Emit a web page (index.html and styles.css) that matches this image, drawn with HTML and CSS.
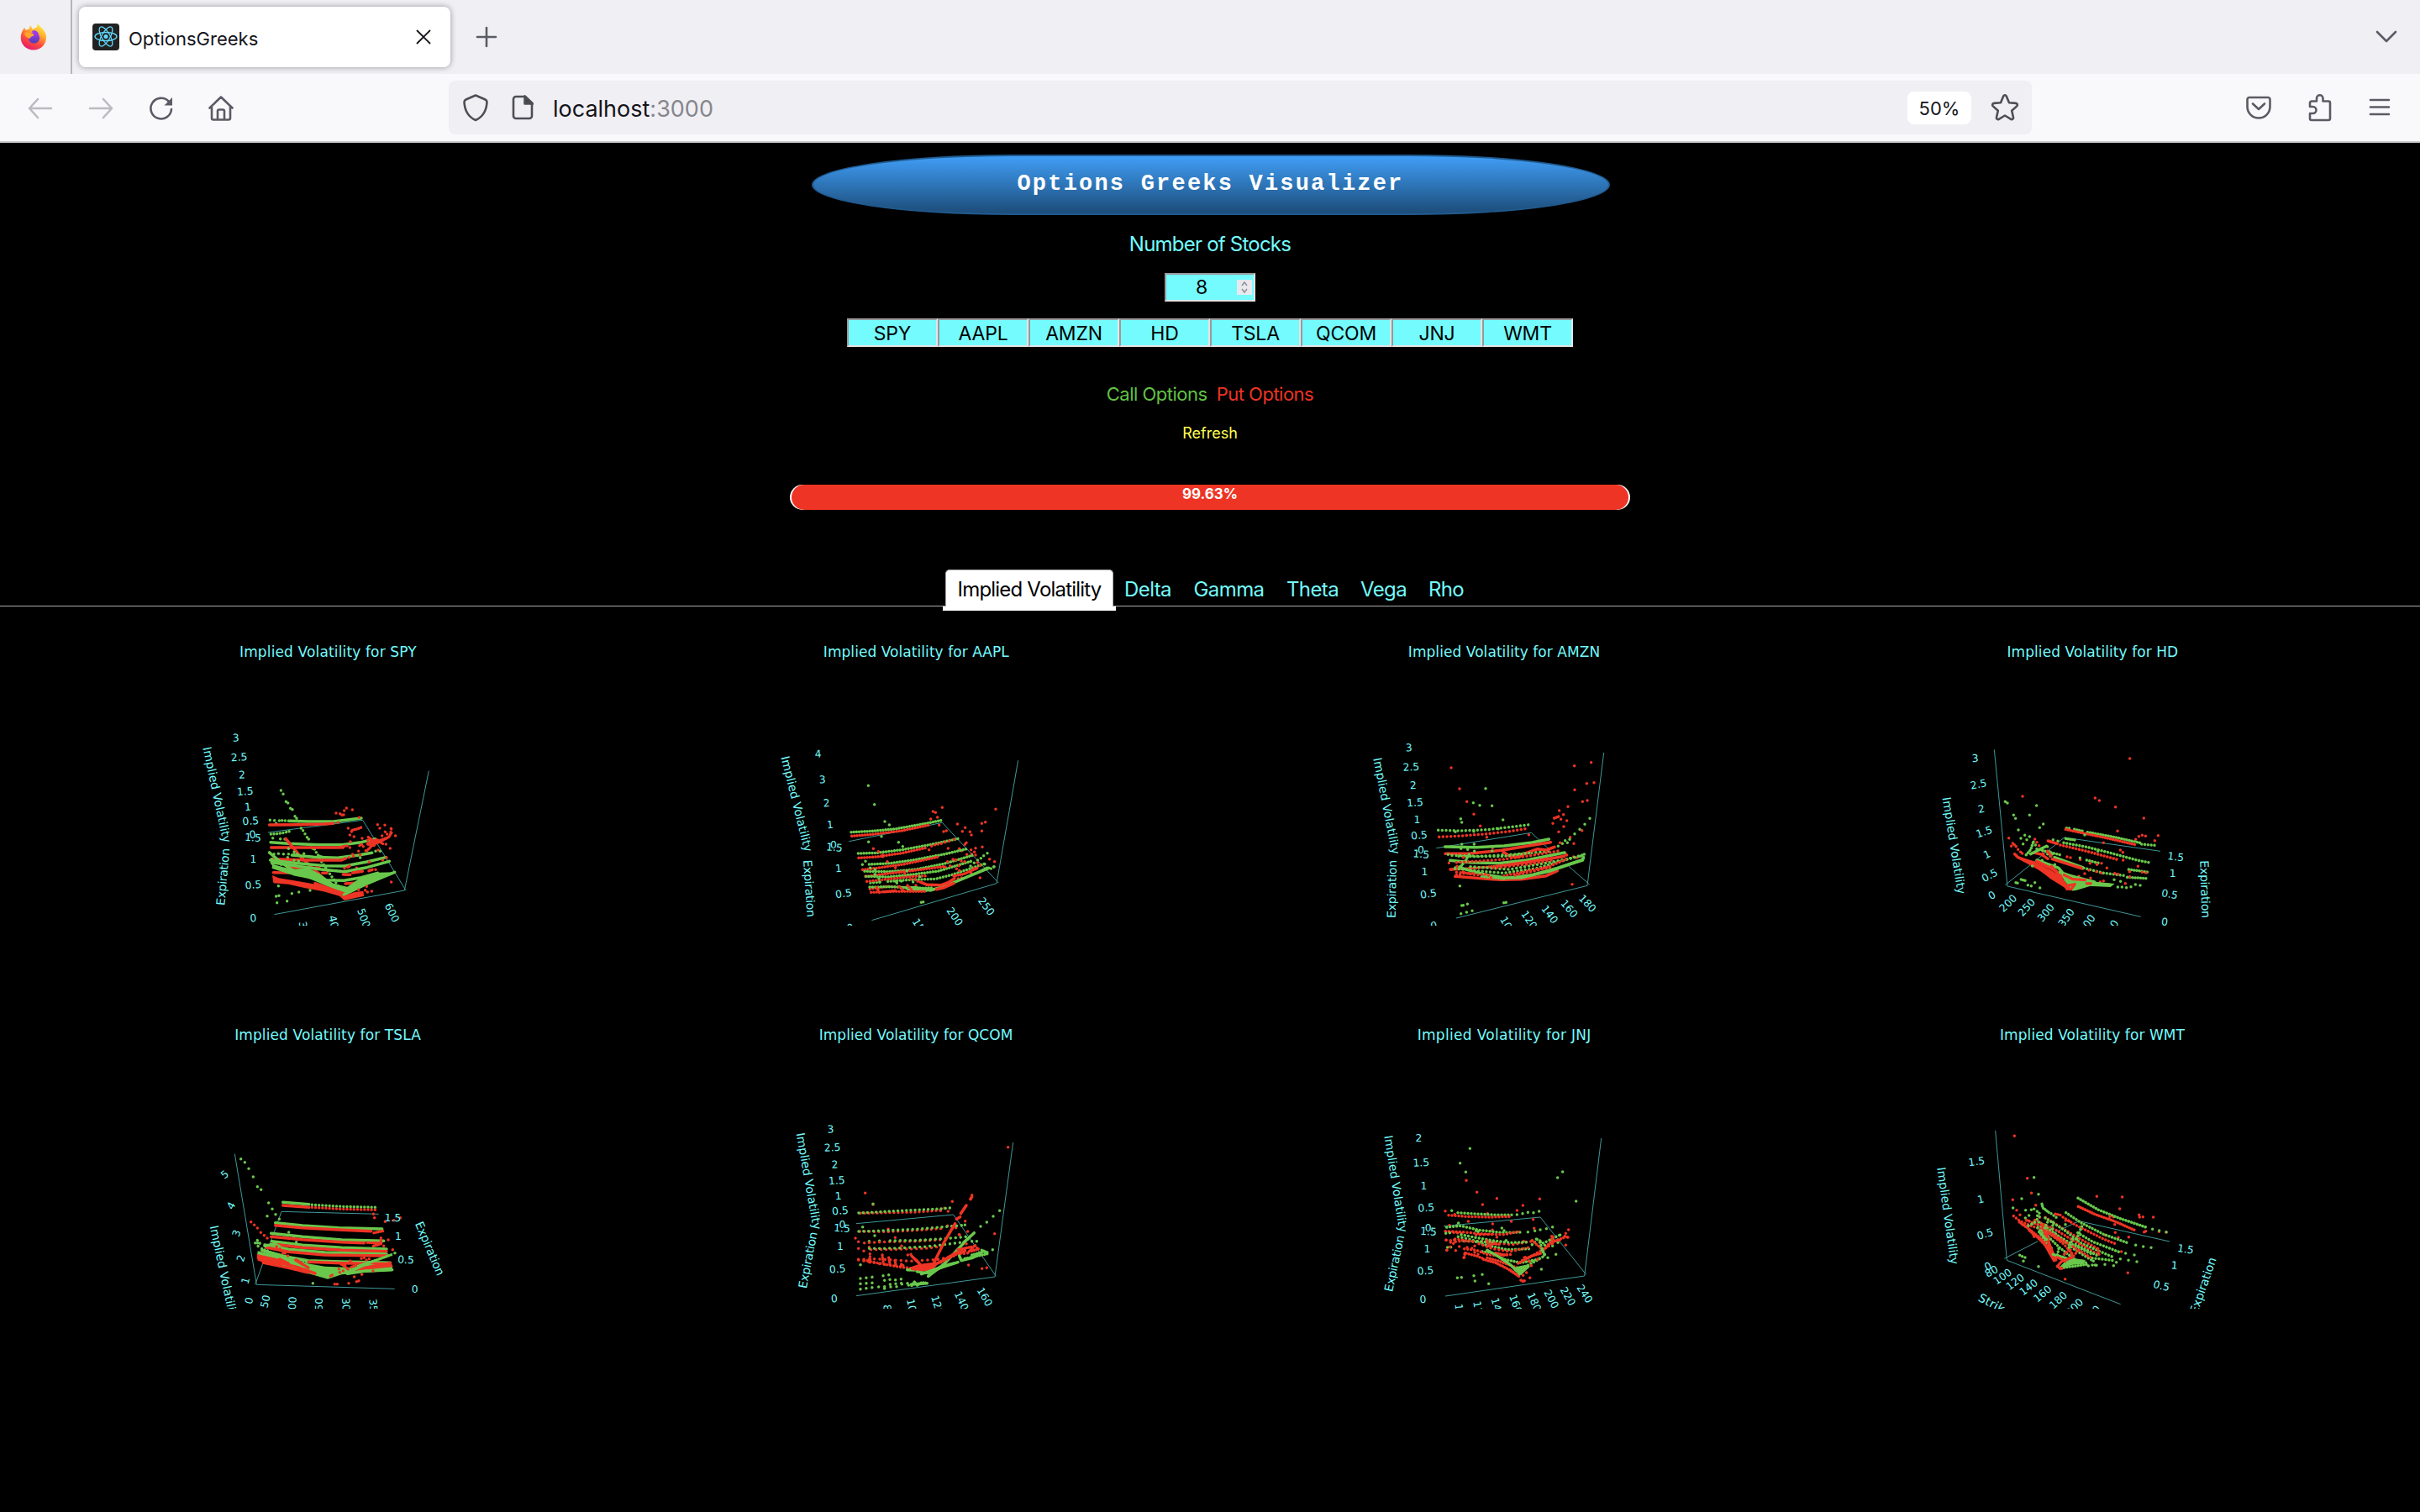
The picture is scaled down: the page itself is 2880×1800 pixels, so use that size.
FILE: index.html
```html
<!DOCTYPE html>
<html lang="en">
<head>
<meta charset="utf-8">
<title>OptionsGreeks</title>
<link rel="stylesheet" href="styles.css">
</head>
<body>
<header class="browser">
  <div class="tabstrip">
    <div class="pinned">
      <svg width="32" height="32" viewBox="0 0 32 32">
        <defs>
          <linearGradient id="fx" x1="0.8" y1="0" x2="0.3" y2="1"><stop offset="0" stop-color="#fff44f"/><stop offset=".35" stop-color="#ffb02e"/><stop offset=".65" stop-color="#ff4f3c"/><stop offset="1" stop-color="#e01a6c"/></linearGradient>
          <linearGradient id="fg" x1="0.5" y1="0" x2="0.5" y2="1"><stop offset="0" stop-color="#a63af0"/><stop offset="1" stop-color="#4a3fb5"/></linearGradient>
        </defs>
        <path fill="url(#fx)" d="M3 8l2-3 2 3 4-2 1-4 3 5 5-3c0-2 1-3 1-4 2 4 9 7 10 15 .8 9-6 16.500-15 16.500S.8 25 .8 17c0-4 .8-6 2.200-9z"/>
        <circle cx="16.500" cy="17" r="6.600" fill="url(#fg)"/>
        <path fill="#ffa52d" d="M5 11c4-2 7 0 10 1 2 .5 2 2 0 3-2 .6-3 1-3 3-4-1-7-3-7-7z"/>
        <path fill="#9a3bea" d="M14 9c4-2 8 1 8 5l-6-1z"/>
      </svg>
    </div>
    <div class="tab">
      <svg class="favicon" width="32" height="32" viewBox="0 0 32 32"><rect width="32" height="32" rx="4" fill="#222"/><g fill="none" stroke="#61dafb" stroke-width="1.300"><ellipse cx="16" cy="15.500" rx="13" ry="5"/><ellipse cx="16" cy="15.500" rx="13" ry="5" transform="rotate(60 16 15.500)"/><ellipse cx="16" cy="15.500" rx="13" ry="5" transform="rotate(120 16 15.500)"/></g><circle cx="16" cy="15.500" r="2.500" fill="#61dafb"/></svg>
      <span class="tab-title">OptionsGreeks</span>
      <svg class="tab-close" width="18" height="18" viewBox="0 0 18 18"><path d="M1.500 1.500l15 15M16.500 1.500l-15 15" stroke="#15141a" stroke-width="1.800" stroke-linecap="round"/></svg>
    </div>
    <svg class="new-tab ico" width="26" height="26" viewBox="0 0 26 26"><path d="M13 2v22M2 13h22"/></svg>
    <svg class="all-tabs ico" width="28" height="16" viewBox="0 0 28 16"><path d="M3 2l11 11L25 2"/></svg>
  </div>
  <div class="toolbar">
    <div class="nav">
      <svg class="ico dim" width="32" height="32" viewBox="0 0 32 32"><path d="M29 16H3M13 5L3 16l10 11"/></svg>
      <svg class="ico dim" width="32" height="32" viewBox="0 0 32 32"><path d="M3 16h26M19 5l10 11-10 11"/></svg>
      <svg class="ico" width="32" height="32" viewBox="0 0 32 32"><path d="M28 17a12.300 12.300 0 1 1-3.500-9.500"/><path d="M29 3v9.500h-9.500z" fill="#5b5b66" stroke="none"/></svg>
      <svg class="ico home" width="32" height="32" viewBox="0 0 32 32"><path d="M2.500 15.500L16 2.500l13.500 13M5 14v13.500a2 2 0 0 0 2 2h18a2 2 0 0 0 2-2V14M12 29V19.500a2 2 0 0 1 2-2h4a2 2 0 0 1 2 2V29"/></svg>
    </div>
    <div class="urlbar">
      <svg class="ico dark" width="30" height="34" viewBox="0 0 30 34"><path d="M15 2.500l11.500 5c1.500.7 2 1.500 2 3C28 21 24 28 15 32 6 28 2 21 1.500 10.500c0-1.500.5-2.300 2-3z"/></svg>
      <svg class="ico dark page-ico" width="26" height="30" viewBox="0 0 26 30"><path d="M16 2H5a3 3 0 0 0-3 3v20a3 3 0 0 0 3 3h16a3 3 0 0 0 3-3V10z"/><path d="M15.500 1.500v9H25z" fill="#45454e"/></svg>
      <span class="url">localhost<span class="port">:3000</span></span>
      <span class="zoom">50%</span>
      <svg class="ico dark" width="34" height="34" viewBox="0 0 34 34"><path d="M15.200 3.500c.7-1.600 2.900-1.600 3.600 0l3.200 7.700 8 .7c1.800.2 2.500 2.300 1.200 3.500l-6 5.300 1.800 8c.4 1.700-1.400 3-2.900 2.100L17 26.500l-7.100 4.300C8.400 31.700 6.600 30.400 7 28.700l1.800-8-6-5.300C1.500 14.200 2.200 12.100 4 11.900l8-.7z"/></svg>
    </div>
    <div class="actions">
      <svg class="ico" width="30" height="28" viewBox="0 0 30 28"><path d="M4 2h22a2.500 2.500 0 0 1 2.500 2.500V13A13.400 13.400 0 0 1 1.500 13V4.500A2.500 2.500 0 0 1 4 2zM8 9.500l7 6.500 7-6.500"/></svg>
      <svg class="ico" width="28" height="34" viewBox="0 0 28 34"><path d="M2 16v-4.500a2 2 0 0 1 2-2h6V6a3.700 3.700 0 0 1 7.500 0v3.500H24a2 2 0 0 1 2 2V30a2 2 0 0 1-2 2H4a2 2 0 0 1-2-2v-6h3.500a4 4 0 0 0 0-8z"/></svg>
      <svg class="ico" width="26" height="22" viewBox="0 0 26 22"><path d="M2 2h22M2 10.500h22M2 19h22"/></svg>
    </div>
  </div>
</header>
<main class="app">
  <h1 class="banner">Options Greeks Visualizer</h1>
  <label class="count-label" for="count">Number of Stocks</label>
  <div class="field count" id="count"><span class="count-value">8</span><svg class="spin" width="18" height="18" viewBox="0 0 18 18"><path d="M6 7l3-4 3 4M6 11l3 4 3-4" fill="none" stroke="#8f8f9d" stroke-width="1.500"/></svg></div>
  <div class="tickers">
    <div class="field">SPY</div><div class="field">AAPL</div><div class="field">AMZN</div><div class="field">HD</div><div class="field">TSLA</div><div class="field">QCOM</div><div class="field">JNJ</div><div class="field">WMT</div>
  </div>
  <div class="legend"><span class="call">Call Options</span><span class="put">Put Options</span></div>
  <div class="refresh">Refresh</div>
  <div class="progress"><div class="progress-fill">99.63%</div></div>
  <ul class="tabs">
    <li class="t-iv selected">Implied Volatility</li><li class="t-delta">Delta</li><li class="t-gamma">Gamma</li><li class="t-theta">Theta</li><li class="t-vega">Vega</li><li class="t-rho">Rho</li>
  </ul>
  <div class="charts" id="charts"></div>
</main>
<script src="charts.js"></script>
</body>
</html>
```
FILE: styles.css
```css
* { box-sizing: border-box; }
body { margin: 0; background: #000; font-family: Inter, "Liberation Sans", sans-serif; width: 2880px; height: 1800px; overflow: hidden; }
svg { display: block; flex: none; }
.browser { height: 170px; border-bottom: 2px solid #cccccf; background: #f9f9fb; }
.tabstrip { height: 88px; background: #f0eff4; display: flex; align-items: center; }
.pinned { width: 86px; height: 88px; border-right: 2px solid #b4b4ba; padding: 28px 0 0 24px; }
.tab { margin: 0 0 0 8px; width: 442px; height: 72px; border-radius: 8px; background: #fff; box-shadow: 0 0 7px rgba(0,0,0,.38); display: flex; align-items: center; padding: 0 23px 0 16px; }
.tab-title { margin-left: 11px; font-size: 22px; color: #15141a; flex: 1; padding-top: 4px; }
.ico { fill: none; stroke: #5b5b66; stroke-width: 2.600; stroke-linecap: round; stroke-linejoin: round; }
.dim { stroke: #bbbbc0; }
.dark { stroke: #4e4e56; }
.home { margin-left: -1px; }
.new-tab { margin-left: 30px; }
.all-tabs { margin: 0 26px 0 auto; }
.toolbar { height: 80px; display: flex; align-items: center; }
.nav { width: 534px; padding: 2px 0 0 32px; display: flex; gap: 40px; }
.urlbar { width: 1884px; height: 64px; border-radius: 8px; background: #f0eff4; display: flex; align-items: center; padding: 0 15px 0 17px; }
.page-ico { margin-left: 28px; }
.url { margin-left: 23px; font-size: 27px; color: #15141a; flex: 1; padding-top: 2px; }
.port { color: #86868c; }
.zoom { width: 76px; height: 39px; margin-right: 23px; border-radius: 8px; background: #fff; color: #15141a; font-size: 22px; line-height: 40px; text-align: center; }
.actions { margin-left: 255px; display: flex; align-items: center; gap: 44px; }
.app { display: flex; flex-direction: column; align-items: center; color: #73fbfd; }
.banner { margin: 14px 0 0 1px; width: 950px; height: 72px; border: 2px solid #205a8e; border-radius: 25% / 50%; background: linear-gradient(#409ef6, #1c4c79); color: #fff; font: bold 27px/67px "Liberation Mono", monospace; letter-spacing: 2.200px; text-align: center; }
.count-label { margin-top: 20px; font-size: 24px; line-height: 30px; letter-spacing: -.78px; }
.field { width: 108px; height: 34px; border: 2px solid; border-color: #9a9a9c #e4e4e6 #e4e4e6 #9a9a9c; background: #73fbfd; color: #000; font-size: 23px; line-height: 33px; letter-spacing: -.2px; text-align: center; }
.count { margin-top: 19px; display: flex; align-items: center; padding-right: 2px; }
.count-value { flex: 1; }
.spin { background: #e9e9ed; }
.tickers { margin-top: 20px; display: flex; }
.legend { margin-top: 41px; display: flex; gap: 11px; font-size: 22px; line-height: 30px; letter-spacing: -.5px; }
.call { color: #62c146; }
.put { color: #ec3323; }
.refresh { margin-top: 20px; font-size: 18px; line-height: 24px; color: #ffff54; }
.progress { margin-top: 49px; width: 1000px; height: 30px; border-radius: 15px; background: #fff; padding: 0 2px; }
.progress-fill { height: 30px; border-radius: 15px; background: #ee3424; color: #fff; font-size: 17px; font-weight: 700; line-height: 22px; text-align: center; }
.tabs { list-style: none; margin: 71px 0 0; padding: 0; align-self: stretch; height: 44px; display: flex; justify-content: center; border-bottom: 1px solid #aaa; font-size: 24px; line-height: 48px; letter-spacing: -.6px; text-align: center; }
.selected { position: relative; height: 44px; background: #fff; color: #000; border: 1px solid #aaa; border-bottom: 0; border-radius: 5px 5px 0 0; line-height: 46px; letter-spacing: -.8px; }
.selected::after { content: ""; position: absolute; left: -4px; right: -4px; bottom: -5px; height: 5px; background: #fff; }
.t-iv { width: 200px; } .t-delta { width: 82px; } .t-gamma { width: 111px; } .t-theta { width: 88px; } .t-vega { width: 81px; } .t-rho { width: 68px; }
.charts { margin-top: 28px; display: grid; grid-template-columns: repeat(4, 700px); row-gap: 104px; }
.chart { width: 700px; height: 352px; overflow: hidden; font-family: "DejaVu Sans", sans-serif; fill: #73fbfd; }
.chart text { text-anchor: middle; dominant-baseline: central; }
.chart .title { font-size: 51px; dominant-baseline: alphabetic; }
.chart .tick { font-size: 37px; }
.chart .name { font-size: 42px; }
.axis { fill: none; stroke: #3f9899; stroke-width: 3; }
.g, .r { fill: none; stroke-width: 10.500; stroke-linecap: round; stroke-linejoin: round; }
.g { stroke: #69c84c; }
.r { stroke: #ee3424; }
.gf { fill: #69c84c; }
.rf { fill: #ee3424; }
```
FILE: charts.js
```js
// Each series: colour (g = calls, r = puts), then a mode:
// p = separate markers, f = filled band, a number = marker spacing along the curve (0 = continuous).
const charts = [
{ name: 'SPY', x: 480, y: 0, title: [571, 632],
  axes: ['357,723 695,679 849,930', '379,1016 844,930 931,503'],
  ticks: ['3 242 386 -3','2.5 254 455 -3','2 264 518 -3','1.5 275 577 -4','1 285 632 -4','0.5 295 683 -4','0 302 731 -4','1.5 303 742 4','1 304 820 0','0.5 304 911 -5','0 304 1030 -4','300 484 1076 82','400 593 1054 76','500 698 1029 70','600 799 1010 64'],
  names: ['Implied Volatility|175|588|78|349','Expiration|196|881|-85|205'],
  s: ['gp 403,573 411,586 421,613 428,618 437,637 444,641 453,665 459,673 467,694 475,708 482,716 489,728 496,740 502,747 510,768 516,780 523,783 529,794 536,805 541,817','g13 541,817 628,945',
  'gp 364,679 380,680 386,691 397,681 407,680 418,681','g0 430,682 500,684 590,684 640,678 690,672','r0 362,696 470,695 555,693 590,691','rp 600,654 614,656 621,661 627,660 629,645 637,636 658,642 607,688 682,670',
  'g11 367,729 385,728 412,724 434,719','gp 374,743 401,746 417,747','g0 366,758 430,763 540,767 620,767 690,758 740,746','r0 368,777 500,777 615,777 630,772','r0 420,745 470,806 628,958',
  'gp 362,795 378,800 394,799 412,800 430,800 450,800 461,800 485,799 430,781 450,793 427,812','g0 442,804 520,811 605,814 680,804 728,796','gp 741,790 757,790 686,813','r0 372,818 500,822 620,822 634,816','g0 365,822 450,832 560,842 630,843 710,828 778,812','r0 425,847 475,850 M525,850 540,850','rp 630,851 641,847 648,842 673,850 694,852 718,829 766,822 780,813',
  'g0 370,830 460,843 540,854 630,863 710,848 790,826','r0 376,866 440,867 M462,868 478,868 M496,868 537,868 M551,868 567,868','r0 625,873 650,874 M659,867 694,862 M717,860 729,856','rp 741,856','g0 376,848 450,872 560,893 628,895 690,884 748,868','r0 633,906 682,903 M692,900 717,897',
  'gf 368,835 440,855 500,850 545,873 590,905 640,917 690,883 748,866 809,865 628,950 560,905 520,893 450,872 376,850','g0 362,795 403,830 440,855 628,935','rf 372,876 395,886 450,895 510,905 560,915 625,945 625,954 555,934 490,922 430,908 376,904','r0 525,905 628,942','g0 628,945 700,910 809,865','g0 540,808 552,812','rf 622,952 665,936 697,932 700,950 630,966','rp 709,916 704,929 712,936 727,933 680,928 797,900',
  'gp 394,914 386,951 396,949 389,974 442,941 467,936 507,930 425,968 370,818 372,833 388,820 404,838 430,831 450,823 466,825',
  'r8 658,715 680,709 692,704','rp 643,708 655,720 649,732 664,738 651,756 649,777 639,771 624,778 748,695 774,697 756,708 796,709 775,721 782,729 764,735 812,735 795,722 793,780 750,786 778,765 693,744 713,751 691,766 684,770 697,773 706,788 680,790 659,801 662,808 646,812 686,803 646,845 797,711 720,760','r9 715,740 745,762 783,742','r8 710,788 740,758 788,740 799,722','r7 720,745 739,770 710,765 746,748 770,766']
},
{ name: 'AAPL', x: 450, y: 0, title: [601, 663],
  axes: ['361,755 694,688 895,903', '442,1037 888,905 965,466'],
  ticks: ['4 251 443 -4','3 266 535 -3','2 281 619 -4','1 294 696 -4','0 306 768 0','1.5 309 777 5','1 324 852 -4','0.5 342 942 -8','0 365 1065 -10','150 615 1064 58','200 738 1024 56','250 851 988 53'],
  names: ['Implied Volatility|175|621|76|350','Expiration|220|923|86|205'],
  s: ['gp 430,556 452,623 489,684 505,696 477,737 431,757 538,758 553,773','g9.500 369,722 445,718 530,710 630,692 696,679','r9.500 371,736 445,730 550,717 645,697','rp 653,675 661,648 670,652 677,669 694,634 683,697 699,720 709,717 748,693 766,719 776,706 793,721 798,732 835,691 848,686 835,718 885,640 837,775 863,818 881,827 829,885',
  'g10 394,798 460,796 550,785 650,767 752,745','r10 396,814 460,810 550,797 640,777','rp 647,785 656,772 668,767 679,765 691,763 704,758 718,754 736,748 715,780 755,781 764,788 780,760 775,766 797,785 813,779 809,793 782,802 799,800 813,804',
  'g10 433,837 510,833 600,820 700,801 785,781','r10 410,856 470,849 560,836 660,815 685,809','g10 417,862 500,863 600,855 700,835 805,804','r10 420,880 500,870 600,858 700,845','g10 422,880 500,882 590,873 680,861 800,825','rp 713,827 732,819 742,821 754,842 762,825 774,827 722,842 705,847','g11 438,903 480,900 M500,898 580,892 670,889 730,874 800,850 845,835','r11 425,898 500,890 590,880 640,878','r11 436,925 500,916 570,920',
  'g10 435,918 520,917 600,922 665,921','gp 409,838 420,826 437,850 454,856 454,872 468,888 471,900 528,898 532,904 548,897 590,900 568,860 614,881 855,797 842,806 832,815 846,836 879,845 808,832 795,843 820,822','rp 448,781 466,791 482,803 482,809 498,827 527,849 545,864 560,870 582,890 596,890 600,912 606,898 623,903 745,853 755,859 763,885 751,888 820,831 829,841 807,851 797,868',
  'gf 545,915 600,915 660,924 720,912 785,880 855,844 860,855 760,895 690,922 635,936 570,930','g0 650,930 700,916 860,850','r10 440,937 520,934 640,934','r10 460,920 470,938 M486,935 530,930 M540,917 560,934 M570,912 590,934','r0 615,900 640,910 690,911 715,902 738,887','r0 673,926 700,920 735,905','r8 735,878 770,872 820,850','gp 619,973 626,971 868,852 878,846']
},
{ name: 'AMZN', x: 450, y: 0, title: [600, 685],
  axes: ['358,779 697,724 760,782 M830,843 905,909', '429,1029 897,913 956,438'],
  ticks: ['3 260 421 -3','2.5 268 490 -3','2 275 555 -2','1.5 282 617 -4','1 289 678 0','0.5 297 734 -5','0 303 786 0','1.5 304 801 5','1 316 864 0','0.5 330 943 -8','0 349 1057 -8','100 612 1057 60','120 689 1036 56','140 762 1016 53','160 832 996 50','180 897 977 46'],
  names: ['Implied Volatility|181|628|79|350','Expiration|199|925|-89|207'],
  s: ['rp 411,492 441,567 467,613 492,658 515,700 538,740 559,778 851,485 911,473 895,548 921,545 852,571 880,613 897,609 828,631 797,645 812,659 803,676 824,681 774,691 813,702 795,721 878,716 836,740 849,763 688,731 843,908','r8 779,672 795,666','gp 534,566 490,617 513,626 557,628 445,674 449,687 596,678 906,673 888,694 870,712 852,728 834,748 818,752 826,760 808,763 793,772',
  'g14 365,715 450,717 540,713 620,704 691,695','r14 368,739 450,735 540,728 620,719 683,709','gp 426,721 492,719 579,710',
  'g0 389,774 500,776 600,771 700,759 760,747','r0 390,799 480,798 590,787 700,769 766,758','gp 449,765 493,765 446,781 470,784 494,790 557,789 400,802','g15 414,805 520,808 650,800 760,790','g8 475,802 465,820 445,845 420,850','r0 597,793 620,808 650,811 680,796 720,782 750,786 780,775','rp 800,760 820,800 824,804 848,810 859,813',
  'g0 407,823 480,830 580,833 680,822 816,795','r0 408,855 450,853','r0 620,838 690,828 790,812 815,808','r9 465,852 550,846 620,838','g14 438,808 500,809 600,808 700,795','r14 430,830 500,826 600,819 700,805 800,788','g14 425,852 500,860 600,868 720,850 885,802','rp 455,812 403,832 412,856 432,844 454,864 475,870',
  'g0 442,848 480,860 530,873 610,886 700,875 790,850 880,820','g15 480,845 620,855 790,825 870,808','r15 430,865 500,870 M560,850 700,835 780,820','r12 600,878 680,862 760,845 830,815','r0 425,880 500,886 590,892 660,890 750,878 790,860','g10 520,880 605,889','r13 430,875 460,868 500,875 540,872 555,886','g0 590,886 660,884 760,862 840,835 880,822 884,812','r14 640,876 720,858 765,848','gp 886,801 882,812 872,808','gp 442,914 449,984 454,983 469,979 446,1013 466,1008 486,1003 599,974 607,973']
},
{ name: 'HD', x: 390, y: 0, title: [661, 611],
  axes: ['349,911 560,741 903,790', '833,1024 357,915 310,427'],
  ticks: ['3 242 459 -4','2.5 254 552 -11','2 264 640 -12','1.5 274 722 -18','1 284 802 -24','0.5 294 877 -28','0 302 948 -30','200 360 976 -44','250 426 991 -47','300 495 1010 -50','350 568 1028 -54','400 643 1050 -55','450 727 1069 -58','1.5 958 811 7','1 947 869 0','0.5 936 944 10','0 918 1043 6'],
  names: ['Implied Volatility|167|770|81|350','Expiration|1063|926|88|206'],
  s: ['gp 349,613 357,618 379,661 386,673 436,661 461,627 396,714 405,744 413,764 419,733 426,749 436,738 450,757 457,768 485,693 472,706 500,774 507,791 520,749 537,754 526,838','rp 411,594 362,743 371,772 376,762 382,767 388,773 395,784 404,793 410,798 455,747 462,758 470,770 478,782 484,798 670,600 685,609 743,632 844,672 794,459 750,718 700,760 895,734 883,752 838,733 850,736 826,737 815,748 760,786 769,794 770,822 823,844',
  'g9.500 568,707 580,708 M596,712 630,719 M643,722 740,740 830,760','g11.500 836,765 893,770','r9 565,712 620,724 720,745 815,767','gp 633,732','g8 565,745 597,750','g11.500 558,760 640,775 720,795 820,822 871,832','r0 502,753 535,763','r11.500 546,768 640,790 750,820','r0 452,795 485,803','g0 525,812 625,848','r0 517,818 625,852','g12 630,850 700,868 780,878','g9.500 790,855 860,865','g9.500 785,883 852,887','g10.500 640,822 690,834','g10.500 462,782 500,792 550,804','rp 570,810 582,813 617,820 652,833 677,838 693,833 712,850 633,870 654,886 648,858 675,863 692,868 740,869 752,872 793,863 838,865 852,867 794,881 688,900 700,896 778,905 612,880',
  'r0 383,800 395,812 430,828 470,850 515,885 578,925','rf 385,805 450,825 520,862 560,895 585,928 565,922 520,890 465,855 410,825','g0 462,822 540,850 576,895','r0 462,826 530,860 560,885','r0 514,844 545,880 570,925','gf 545,862 620,885 650,897 740,906 725,918 645,914 590,932 560,895','g0 545,865 580,877 650,895 668,900','g7 440,800 470,785 500,770','g10 424,803 440,785 450,755','gp 481,823 500,800 510,808 517,800','g0 600,925 660,907 720,910','r7 560,875 590,890 640,893','r7 585,925 600,905 M575,912 600,908 M640,905 655,905','gp 738,892 761,898 831,912 814,909 798,917 782,920 766,918 751,918 616,814 680,790','r7 484,805 505,820 M500,790 515,810','gp 387,902 393,904 406,891 413,893 420,895 430,911 442,914 455,902 473,921 446,843']
},
{ name: 'TSLA', x: 480, y: 12, title: [570, 665],
  axes: ['311,958 405,697 752,706', '809,973 316,958 238,491'],
  ticks: ['5 203 565 -38','4 226 676 -62','3 245 775 -72','2 261 864 -72','1 277 944 -75','0 290 1015 -75','50 348 1018 -78','100 444 1036 -85','150 540 1040 -90','300 635 1040 87','350 733 1044 84','1.5 802 720 2','1 822 786 0','0.5 849 870 3','0 881 976 0'],
  names: ['Implied Volatility|200|918|78|350','Expiration|935|829|67|205'],
  s: ['gp 260,509 274,521 288,544 304,573 319,608 332,619 359,666 372,688 384,707 397,724 354,713 431,771 448,792 458,806','g12 319,800 310,811 329,808 316,829','rp 296,734 308,745 319,756 331,772 343,782 354,792 733,706 737,719 775,733 806,728 829,719 786,798 802,833 770,820',
  'g0 410,664 503,671','r0 410,675 503,682','g12.500 514,673 620,679 739,682','r12.500 514,682 620,688 739,691','g0 383,737 480,747 610,755 764,759','r0 383,746 480,755 610,762 725,767','r8 735,773 770,766','g0 368,775 480,787 620,798 770,802','r0 368,787 480,797 620,806 700,809','r7 712,808 765,810 M733,820 760,812 760,788','g0 370,803 480,817 620,826 780,831','r0 370,813 480,826 620,835 780,839','g0 345,816 430,832 560,843 780,849','r0 350,825 430,841 560,852 780,855','g0 335,835 420,858 500,872 620,876 793,880','r0 500,877 620,881 793,884',
  'gf 320,838 400,855 500,883 560,893 660,897 700,880 760,862 809,845 720,885 800,890 802,908 700,915 620,922 570,938 500,918 400,888 318,858','r0 322,862 380,875 460,895 525,918','r0 322,855 400,868 430,883','g11 335,830 380,848 460,868 500,878','g6 345,820 380,812 400,822','g9 330,847 400,862','r7 460,870 480,885 505,900','r0 455,870 480,885','rf 665,910 700,893 795,875 803,895 720,903','g0 640,919 700,910 800,905','g9 660,898 745,870 800,850','gp 810,845 517,953','rf 318,852 350,860 400,870 415,885 390,893 320,872','r6 340,880 430,898 500,915','rp 595,956 604,956 645,953 673,947 681,944 665,930 692,922 732,909 625,909 643,903 610,902 618,885 632,889 650,873 655,880 700,862 708,870 718,866 690,865 580,927 586,924 613,914 388,822 400,830 418,846 428,855 410,845 387,830','r8 620,885 640,900 M655,895 675,888']
},
{ name: 'QCOM', x: 450, y: 12, title: [600, 692],
  axes: ['387,740 734,708 886,928', '387,998 882,930 947,450'],
  ticks: ['3 295 404 -3','2.5 302 469 -3','2 310 530 -3','1.5 317 587 -4','1 323 642 -4','0.5 330 695 -5','0 337 745 0','1.5 336 757 4','1 330 822 0','0.5 320 903 -5','0 309 1009 -4','80 498 1053 84','100 586 1044 78','120 676 1031 72','140 762 1016 65','160 845 1002 60'],
  names: ['Implied Volatility|218|588|80|350','Expiration|214|870|-79|205'],
  s: ['rp 419,631 447,672 384,792 395,805 416,809 433,824 395,829 414,838 730,661 702,685 715,696 688,694 776,731 800,638 795,653 929,467 881,776 713,748 743,755 754,779 785,768 526,790 501,760 549,820 571,852 582,850 788,888 836,901 853,898','gp 447,670 410,752 453,783 899,694 876,714 853,735 831,750 402,887 874,833 775,745 817,803 433,803 470,802',
  'r15 402,703 500,701 600,699 690,692','g15.500 396,702 490,697 600,691 690,687 732,683','r17 400,768 500,769 600,764 700,757','g17.500 396,768 490,765 600,760 780,745','r18 434,808 500,805 600,803 700,797','g18 508,801 600,800 700,794 790,786','r18 440,833 530,832 640,828 700,820','g18 434,829 530,828 640,822 790,804',
  'r0 800,645 795,652 M780,675 760,704','r0 758,716 745,724','r0 740,740 700,808 662,885','r10 436,848 437,880','r19 395,868 460,866 580,874 680,868 780,845','r19 395,870 480,885 560,893','r8 503,862 508,890 M525,872 530,895 M480,852 484,882 M548,885 560,895','r12 415,870 460,880 540,895 590,900','r0 585,856 608,878 618,890','g0 569,905 598,906',
  'rf 582,895 610,885 650,880 680,878 662,908 615,912 582,905','g9 605,912 650,918','g0 644,928 700,885 775,805','g0 620,920 680,900 750,878','gf 655,905 690,888 740,875 715,890 670,912','r0 655,893 700,870 740,846 770,838','r12 690,878 740,852 775,832','r8 750,833 800,823 M755,850 780,835 M785,845 810,818 M800,838 825,830','g0 770,808 790,790 808,773','g0 755,855 762,872 800,863 830,848','g9 775,865 860,847 M800,852 850,838','g7 835,835 860,845','gp 784,796 800,803 645,928',
  'g21 402,936 445,931','g21 402,955 445,952','g21 402,974 445,968','gp 483,926 503,923 467,966 488,943 507,940 527,941 547,938 488,965 488,972 508,957 510,966 528,955 531,965 548,953 550,956 570,953 574,960','g8 585,961 595,948 605,960 620,951 642,952','g0 584,957 640,953','rp 756,780 780,812 812,818 818,827 806,835']
},
{ name: 'JNJ', x: 450, y: 12, title: [600, 620],
  axes: ['384,749 729,717 893,922', '390,999 887,927 947,435'],
  ticks: ['2 295 435 0','1.5 304 523 -3','1 313 606 0','0.5 322 684 -4','0 329 755 0','1.5 330 769 3','1 325 830 0','0.5 319 909 -5','0 310 1011 -3','100 440 1061 84','120 508 1052 80','140 574 1040 75','160 641 1028 70','180 707 1020 66','200 768 1010 62','220 827 1000 60','240 887 991 57'],
  names: ['Implied Volatility|214|598|81|350','Expiration|208|882|-78|205'],
  s: ['gp 478,472 443,524 463,556 809,555 791,576 857,660 413,694 725,696 705,701 685,700 666,704 646,708 592,756 600,765 607,800 437,738 773,752 751,758 729,762 710,766 800,781 785,850 733,903 756,862 433,934 448,932 492,926 496,945 522,922 545,955 398,825 410,824','rp 465,586 503,628 523,672 574,650 541,704 559,741 472,732 626,732 646,693 667,675 727,652 704,725 405,746 390,695 707,757 558,763 574,788 830,762 820,775 828,789 820,817 670,803 692,934',
  'g12 435,701 500,705 570,709 628,709','r12 402,710 470,715 550,717 618,715','rp 424,707','g12 395,753 445,748 510,763 590,772 660,771','r13 390,767 450,770 530,777 600,779 660,767','gp 685,770 431,747','r14 392,769 450,775 M500,780 560,778','gp 392,775 406,773','r16 393,799 440,803 530,803 630,815 700,803','g13 447,780 500,790 560,801 620,808 682,806','g14 436,787 500,802 570,810','r18 409,807 440,803','g12 452,800 500,805 540,818 610,833 690,830','r10 540,800 545,820 560,812 590,815','g13 700,815 720,795 740,810 800,780','r15 510,812 560,830 620,840 690,825','r17 395,835 430,800','g11 522,840 560,845 600,868 660,880 710,870','r12 458,830 500,835 540,850 580,855 630,850','r10 458,860 460,845 500,855 525,865','r9 527,868 570,880 610,900 650,925','r8 570,845 600,852 615,850','r10 540,862 585,875 620,888 650,900','r13 425,795 460,800 500,805','rp 393,799 396,835 427,836 440,822 422,798 456,862 460,845 468,825 485,828 495,820 495,843 507,850','g7 540,835 575,855 620,885 655,918','gf 640,895 690,885 685,900 660,925','r10 700,800 740,835 760,812 820,787','r12 665,872 700,855 760,820 775,786','g12 675,895 745,855 725,800','r8 650,882 700,855 735,845','r8 620,905 655,930','g11 690,875 730,865','g9 735,835 750,857','r9 655,920 685,895','gp 715,795 730,806 745,817 770,800 792,808 773,820 770,799','r8 660,942 670,948 675,940','g8 500,765 512,770','g7 640,905 665,910 680,895 M655,920 690,890','r9 770,785 772,812 M780,801 800,799 M817,785 830,790','rp 668,925 680,915 697,890 672,862 676,860 690,875 720,868']
},
{ name: 'WMT', x: 390, y: 12, title: [660, 660],
  axes: ['346,865 466,803 M495,786 613,731 936,804', '761,1028 355,871 314,408'],
  ticks: ['1.5 247 519 -7','1 262 654 -12','0.5 277 778 -17','0 288 893 -24','80 300 911 -28','100 340 930 -35','120 385 949 -36','140 433 968 -38','160 483 991 -40','180 539 1014 -43','200 597 1039 -45','220 660 1065 -48','1.5 993 832 9','1 953 890 5','0.5 907 963 14'],
  names: ['Implied Volatility|145|712|82|350','Expiration|1055|961|-71|210','Strike|312|1030|28|125'],
  s: ['rp 382,427 428,578 443,631 458,674 376,655 390,692 402,709 472,718 676,643 767,645 758,687 827,709 829,717 841,716 878,717 736,716 740,743 742,772 753,790 790,788 764,840 787,916 563,938 898,769 924,771 845,770 851,767 706,781','gp 452,575 468,635 408,651 377,684 422,692 442,691 452,688 463,696 471,703 464,712 434,711 421,720 447,740 564,743 875,760 899,765 924,770 815,817 842,822 870,826 810,852 789,871 819,876 779,846 760,866 746,878 736,890 705,886 675,889 401,853 410,857 420,861 414,874 468,893',
  'g10.500 609,649 680,690 760,722 855,754','r9 610,679 670,707 740,732 817,766','g8 480,670 484,684 505,700','gp 513,704 522,711 531,718','g11 566,701 620,737 700,778 792,811','r9 528,706 550,710','r11.500 555,717 600,745 700,795 740,811','rp 565,729 577,731','g11.500 608,773 660,804 755,841','r12 492,718 550,755 610,791 680,830','g12 492,720 560,763 620,810 735,860','r12 455,728 530,763 600,805 680,850','g12 470,735 540,785 590,815 660,850','g12 660,863 735,872','g12 466,745 530,778 600,835 660,872','r12 500,765 560,803 620,840 655,862','r11 425,728 470,745','r12 379,713 400,730 440,748 490,763 560,815 590,850','g12 465,755 495,795 M600,815 680,855','r9 400,735 435,760 485,800 525,865','g11 480,765 540,823 600,870','r9 435,765 460,785 500,825 530,870','g12 470,770 485,790 520,835','r0 478,745 487,745 520,860','r0 482,745 500,800 530,870','r7 485,805 525,875','g7 520,850 590,870 635,875','g10 475,775 500,800','g13 432,748 455,735 475,710','g12 500,735 490,755 500,775','g12 605,795 612,775 625,745 M520,735 516,765','r11 560,850 580,830 590,860 610,835','rp 720,723 723,714 433,730 412,745 422,750 452,787 448,778','gf 545,893 565,873 600,865 635,870 630,885 590,887 560,898','r7 535,893 550,875 590,860','r0 538,892 545,900 552,900','gp 646,891 660,888 670,888 664,874 637,880','g10 560,897 640,886','r8 535,860 565,875','g11 590,795 575,830 M540,830 535,855','r10 490,765 560,810 M680,830 685,855']
}];

const dots = c => c.split(' ').map(p => `M${p}h0.01`).join('');
const line = c => c.split(' ').map((p, i) => (i && p[0] !== 'M' ? 'L' : p[0] === 'M' ? '' : 'M') + p).join(' ');
const series = s => {
  const cut = s.indexOf(' ');
  const color = s[0], mode = s.slice(1, cut), c = s.slice(cut + 1);
  if (mode === 'p') return `<path class="${color}" d="${dots(c)}"/>`;
  if (mode === 'f') return `<path class="${color}f" d="${line(c)}Z"/>`;
  const dash = mode === '0' ? '' : ` stroke-dasharray="0.01 ${mode}"`;
  return `<path class="${color}" d="${line(c)}"${dash}/>`;
};
const tick = t => {
  const [v, x, y, a] = t.split(' ');
  return `<text class="tick" transform="translate(${x} ${y}) rotate(${a})">${v}</text>`;
};
const axisName = t => {
  const [v, x, y, a, w] = t.split('|');
  return `<text class="name" textLength="${w}" transform="translate(${x} ${y}) rotate(${a})">${v}</text>`;
};
document.getElementById('charts').innerHTML = charts.map(c => `<svg class="chart" viewBox="0 0 2100 1056"><g transform="translate(${c.x} ${c.y})">
<text class="title" x="${c.title[0]}" y="${c.y ? 84 : 96}" textLength="${c.title[1]}">Implied Volatility for ${c.name}</text>
${c.axes.map(a => `<path class="axis" d="${line(a)}"/>`).join('')}
${c.s.map(series).join('')}${c.ticks.map(tick).join('')}${c.names.map(axisName).join('')}</g></svg>`).join('');
```
